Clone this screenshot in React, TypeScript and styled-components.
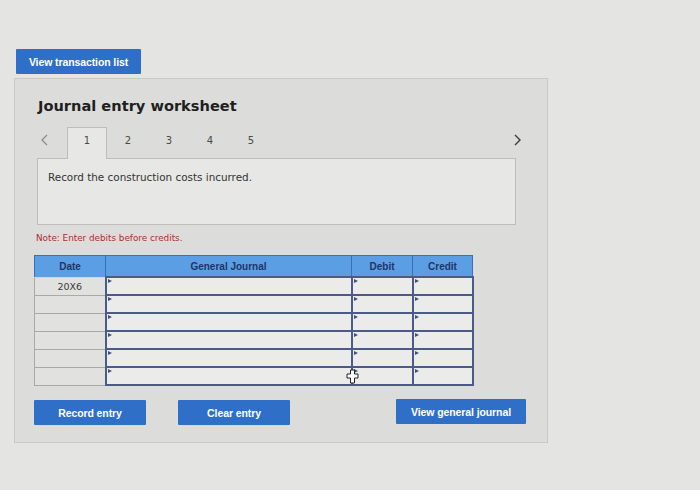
import React, { FC } from 'react';
import styled, { createGlobalStyle } from 'styled-components';

const GlobalStyle = createGlobalStyle`
  html, body {
    margin: 0;
    padding: 0;
    background: #e4e4e2;
  }
  body {
    font-family: 'DejaVu Sans', Verdana, sans-serif;
  }
`;

const Page = styled.div`
  width: 700px;
  height: 490px;
  box-sizing: border-box;
  padding: 49px 0 0 14px;
  position: relative;
  overflow: hidden;
`;

const BlueButton = styled.button<{ $w: number }>`
  display: block;
  flex-shrink: 0;
  width: ${p => p.$w}px;
  height: 25px;
  padding: 0;
  border: none;
  border-radius: 1px;
  background: #2f6fc7;
  color: #fff;
  font-family: 'Liberation Sans', Arial, sans-serif;
  font-weight: bold;
  font-size: 10.5px;
  letter-spacing: -0.1px;
  cursor: pointer;
`;

const TopButton = styled(BlueButton)`
  margin-left: 2px;
`;

const Panel = styled.section`
  margin-top: 4px;
  width: 534px;
  height: 365px;
  box-sizing: border-box;
  border: 1px solid #c9c9c7;
  background: #dcdcda;
  padding: 17px 31px 0 22px;
`;

const Title = styled.h2`
  margin: 0 0 0 1px;
  font-size: 14.6px;
  line-height: 20px;
  font-weight: bold;
  color: #1f1f1f;
`;

const TabRow = styled.div`
  margin-top: 11px;
  display: flex;
  align-items: stretch;
  height: 31px;
  margin-right: -5px;
  position: relative;
  z-index: 1;
`;

const Arrow = styled.span<{ $side: 'left' | 'right' }>`
  width: 30px;
  box-sizing: border-box;
  display: flex;
  align-items: center;
  justify-content: ${p => (p.$side === 'left' ? 'flex-start' : 'flex-end')};
  padding-left: ${p => (p.$side === 'left' ? '4px' : '0')};
  color: ${p => (p.$side === 'left' ? '#8a8a8a' : '#3a3a3a')};
  margin-left: ${p => (p.$side === 'right' ? 'auto' : '0')};
  padding-bottom: 6px;
  svg {
    display: block;
  }
`;

const Tab = styled.div<{ $active?: boolean }>`
  width: 40px;
  box-sizing: border-box;
  display: flex;
  align-items: center;
  justify-content: center;
  padding-bottom: 6px;
  margin-left: ${p => (p.$active ? '0' : '1px')};
  font-size: 10px;
  color: #4a4a4a;
  background: ${p => (p.$active ? '#e7e7e5' : 'transparent')};
  border: 1px solid ${p => (p.$active ? '#bdbdbb' : 'transparent')};
  border-bottom: none;
  margin-bottom: -1px;
`;

const InfoBox = styled.div`
  height: 67px;
  box-sizing: border-box;
  border: 1px solid #bdbdbb;
  background: #e7e7e5;
  padding: 12px 10px;
  font-size: 10.4px;
  line-height: 13px;
  color: #333;
`;

const Note = styled.p`
  margin: 7px 0 0 -1px;
  font-size: 8.8px;
  line-height: 12px;
  color: #a8322f;
`;

const Table = styled.table`
  margin: 11px 0 0 -3px;
  border-collapse: collapse;
  table-layout: fixed;
  width: 434px;
`;

const Head = styled.th<{ $w: number }>`
  width: ${p => p.$w}px;
  height: 20px;
  padding: 0;
  background: #5c9ee4;
  border: 1px solid #3a70b9;
  border-bottom: 1px solid #c9d9ea;
  color: #1f3566;
  font-family: 'Liberation Sans', Arial, sans-serif;
  font-size: 10px;
  font-weight: bold;
  text-align: center;
`;

const DateCell = styled.td`
  height: 17px;
  padding: 0;
  border: 1px solid #a9a9a9;
  background: #e1e1df;
  color: #3a3a3a;
  font-size: 9.5px;
  text-align: center;
`;

const InputCell = styled.td`
  height: 15px;
  padding: 0;
  border: 2px solid #4c5a88;
  background: #ebebe9;
  position: relative;
  &::before {
    content: '';
    position: absolute;
    left: 1px;
    top: 1px;
    border-left: 4px solid #3f4f86;
    border-top: 2px solid transparent;
    border-bottom: 2px solid transparent;
  }
`;

const ButtonRow = styled.div`
  margin: 14px 0 0 -3px;
  display: flex;
  gap: 32px;
  align-items: flex-start;
`;

const RightButton = styled(BlueButton)`
  margin-left: 74px;
  margin-top: -1px;
`;

const Cursor = styled.svg`
  position: absolute;
  left: 346px;
  top: 369px;
`;

const rows = ['20X6', '', '', '', '', ''];

const App: FC = () => {
  return (
    <Page>
      <GlobalStyle />
      <TopButton $w={125}>View transaction list</TopButton>
      <Panel>
        <Title>Journal entry worksheet</Title>
        <TabRow>
          <Arrow $side='left'>
            <svg width='7' height='12' viewBox='0 0 7 12'>
              <path d='M6 1 L1 6 L6 11' fill='none' stroke='currentColor' strokeWidth='1.2' />
            </svg>
          </Arrow>
          {[1, 2, 3, 4, 5].map(n => (
            <Tab key={n} $active={n === 1}>
              {n}
            </Tab>
          ))}
          <Arrow $side='right'>
            <svg width='7' height='12' viewBox='0 0 7 12'>
              <path d='M1 1 L6 6 L1 11' fill='none' stroke='currentColor' strokeWidth='1.4' />
            </svg>
          </Arrow>
        </TabRow>
        <InfoBox>Record the construction costs incurred.</InfoBox>
        <Note>Note: Enter debits before credits.</Note>
        <Table>
          <thead>
            <tr>
              <Head $w={70}>Date</Head>
              <Head $w={245}>General Journal</Head>
              <Head $w={60}>Debit</Head>
              <Head $w={59}>Credit</Head>
            </tr>
          </thead>
          <tbody>
            {rows.map((d, i) => (
              <tr key={i}>
                <DateCell>{d}</DateCell>
                <InputCell />
                <InputCell />
                <InputCell />
              </tr>
            ))}
          </tbody>
        </Table>
        <ButtonRow>
          <BlueButton $w={112}>Record entry</BlueButton>
          <BlueButton $w={112}>Clear entry</BlueButton>
          <RightButton $w={130}>View general journal</RightButton>
        </ButtonRow>
      </Panel>
      <Cursor width='13' height='15' viewBox='0 0 13 15'>
        <path
          d='M4.5 1 H8.5 V5 H12 V9 H8.5 V14 H4.5 V9 H1 V5 H4.5 Z'
          fill='#fff'
          stroke='#222'
          strokeWidth='1'
        />
      </Cursor>
    </Page>
  );
};

export default App;
